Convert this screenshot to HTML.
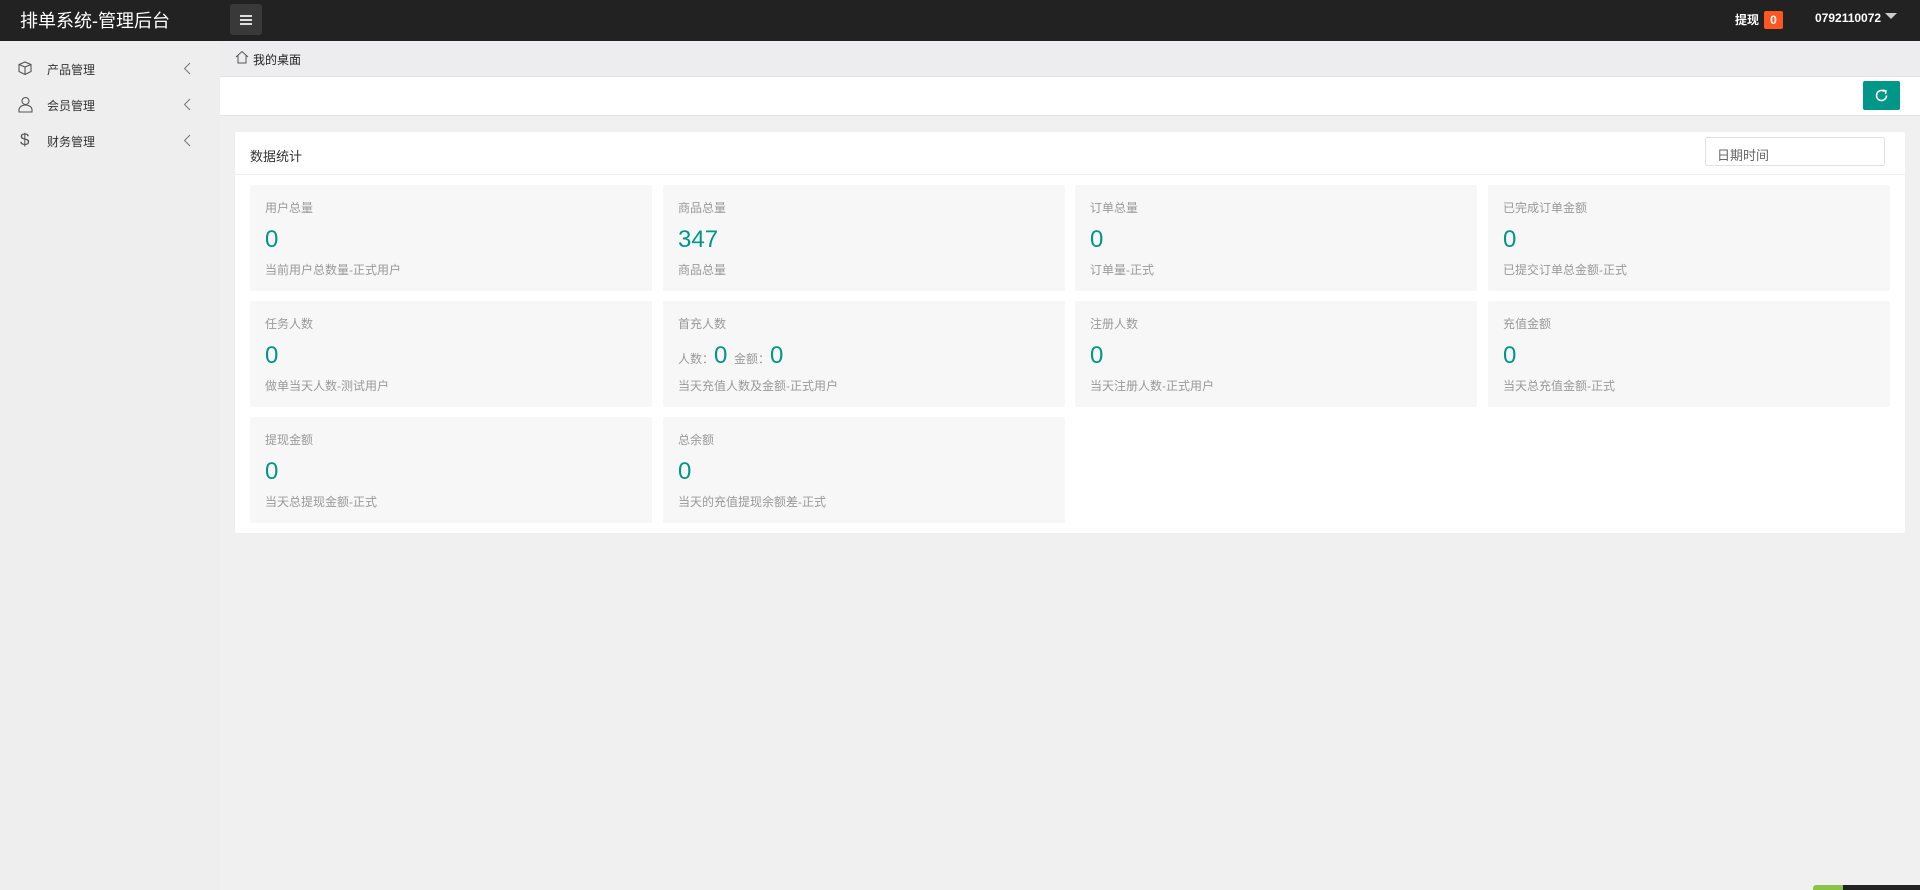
<!DOCTYPE html>
<html><head><meta charset="utf-8"><style>
*{margin:0;padding:0;box-sizing:border-box}
body{width:1920px;height:890px;overflow:hidden;background:#f0f0f0;font-family:"Liberation Sans","Noto Sans CJK SC",sans-serif;position:relative;font-size:13px;color:#333}
.hd{position:absolute;left:0;top:0;width:1920px;height:41px;background:#222}
.title{position:absolute;left:20px;top:7px;color:#fff;font-size:18px}
.mb{position:absolute;left:230px;top:4px;width:32px;height:31px;background:#393939;border-radius:3px}
.mb i{position:absolute;left:10px;width:12px;height:2px;background:#ddd}
.tx{position:absolute;top:11px;color:#fff;font-size:12px;font-weight:bold}
.badge{position:absolute;left:1764px;top:11px;width:19px;height:18px;background:#ff5722;color:#fff;font-size:12px;font-weight:bold;text-align:center;line-height:18px;border-radius:2px}
.arr{position:absolute;left:1885px;top:13px;border:6px solid transparent;border-top:6px solid #ccc}
.side{position:absolute;left:0;top:41px;width:220px;height:849px;background:#eee}
.it{position:absolute;left:0;width:220px;height:36px;font-size:12px;color:#333}
.it span{position:absolute;left:47px;top:10px}
.it svg{position:absolute}
.bc{position:absolute;left:220px;top:41px;width:1700px;height:35px;background:#ededef}
.wb{position:absolute;left:220px;top:76px;width:1700px;height:40px;background:#fff;border-top:1px solid #e2e2e2;border-bottom:1px solid #e2e2e2}
.rf{position:absolute;left:1863px;top:81px;width:37px;height:29px;background:#009688;border-radius:2px}
.card{position:absolute;left:235px;top:132px;width:1670px;height:401px;background:#fff;border-radius:2px}
.ch{height:43px;border-bottom:1px solid #f0f0f0;position:relative}
.ch span{position:absolute;left:15px;top:14px;font-size:13px;color:#333}
.inp{position:absolute;left:1470px;top:5px;width:180px;height:29px;border:1px solid #e2e2e2;border-radius:2px;padding:7px 11px;color:#666;font-size:13px}
.cell{position:absolute;width:402px;height:106px;background:#f7f7f7;border-radius:2px}
.cell .l{position:absolute;left:15px;top:14px;font-size:12px;color:#999}
.cell .n{position:absolute;left:15px;top:41px;font-size:24px;color:#009688}
.cell .d{position:absolute;left:15px;top:76px;font-size:12px;color:#999}
.cell .n small{font-size:12px;color:#999}
</style></head><body>
<div class="hd">
<div class="title">排单系统-管理后台</div>
<div class="mb"><i style="top:11px"></i><i style="top:15px"></i><i style="top:19px"></i></div>
<div class="tx" style="left:1735px">提现</div>
<div class="badge">0</div>
<div class="tx" style="left:1815px">0792110072</div>
<div class="arr"></div>
</div>
<div class="side">
<div class="it" style="top:10px"><svg style="left:17px;top:9px" width="17" height="17" viewBox="0 0 17 17" fill="none" stroke="#555" stroke-width="1.1"><path d="M2 4.5L8 2l6 2.5v7L8 14.5 2 11.5z M2 4.5L8 7l6-2.5 M8 7v7.5"/></svg><span>产品管理</span><svg style="left:183px;top:11px" width="8" height="13" viewBox="0 0 8 13" fill="none" stroke="#777"><path d="M7 1L1.5 6.5 7 12"/></svg></div>
<div class="it" style="top:46px"><svg style="left:17px;top:9px" width="17" height="17" viewBox="0 0 17 17" fill="none" stroke="#555" stroke-width="1.1"><circle cx="8.5" cy="5" r="3.5"/><path d="M2 16v-2c0-3 3-5 6.5-5s6.5 2 6.5 5v2z"/></svg><span>会员管理</span><svg style="left:183px;top:11px" width="8" height="13" viewBox="0 0 8 13" fill="none" stroke="#777"><path d="M7 1L1.5 6.5 7 12"/></svg></div>
<div class="it" style="top:82px"><span style="left:20px;top:7px;font-size:17px;color:#555">$</span><span>财务管理</span><svg style="left:183px;top:11px" width="8" height="13" viewBox="0 0 8 13" fill="none" stroke="#777"><path d="M7 1L1.5 6.5 7 12"/></svg></div>
</div>
<div class="bc"><svg style="position:absolute;left:15px;top:9px" width="14" height="14" viewBox="0 0 14 14" fill="none" stroke="#555"><path d="M1 7L7 1.5 13 7 M3 5.5V13h8V5.5"/></svg><span style="position:absolute;left:33px;top:10px;font-size:12px;color:#222">我的桌面</span></div>
<div class="wb"></div>
<div class="rf"><svg style="position:absolute;left:11px;top:7px" width="15" height="15" viewBox="0 0 15 15" fill="none" stroke="#fff" stroke-width="1.6"><path d="M12.5 7.5A5 5 0 1 1 10.5 3.5"/><path d="M9 2.2L12 3l-.6 3" /></svg></div>
<div class="card">
<div class="ch"><span>数据统计</span><div class="inp">日期时间</div></div>
<div class="cell" style="left:15px;top:53px"><div class="l">用户总量</div><div class="n">0</div><div class="d">当前用户总数量-正式用户</div></div>
<div class="cell" style="left:428px;top:53px"><div class="l">商品总量</div><div class="n">347</div><div class="d">商品总量</div></div>
<div class="cell" style="left:840px;top:53px"><div class="l">订单总量</div><div class="n">0</div><div class="d">订单量-正式</div></div>
<div class="cell" style="left:1253px;top:53px"><div class="l">已完成订单金额</div><div class="n">0</div><div class="d">已提交订单总金额-正式</div></div>
<div class="cell" style="left:15px;top:169px"><div class="l">任务人数</div><div class="n">0</div><div class="d">做单当天人数-测试用户</div></div>
<div class="cell" style="left:428px;top:169px"><div class="l">首充人数</div><div class="n"><small>人数：</small>0 <small>金额：</small>0</div><div class="d">当天充值人数及金额-正式用户</div></div>
<div class="cell" style="left:840px;top:169px"><div class="l">注册人数</div><div class="n">0</div><div class="d">当天注册人数-正式用户</div></div>
<div class="cell" style="left:1253px;top:169px"><div class="l">充值金额</div><div class="n">0</div><div class="d">当天总充值金额-正式</div></div>
<div class="cell" style="left:15px;top:285px"><div class="l">提现金额</div><div class="n">0</div><div class="d">当天总提现金额-正式</div></div>
<div class="cell" style="left:428px;top:285px"><div class="l">总余额</div><div class="n">0</div><div class="d">当天的充值提现余额差-正式</div></div>
</div>
<div style="position:absolute;left:1813px;top:885px;width:31px;height:5px;background:#8bc34a;border-radius:3px 0 0 0"></div>
<div style="position:absolute;left:1843px;top:885px;width:77px;height:5px;background:#222"></div>
</body></html>
